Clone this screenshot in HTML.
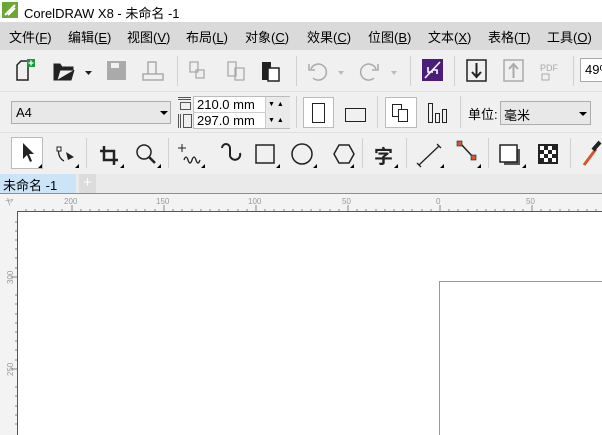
<!DOCTYPE html>
<html><head><meta charset="utf-8"><style>
*{margin:0;padding:0;box-sizing:border-box}
html,body{width:602px;height:435px;overflow:hidden}
body{background:#fff;font-family:"Liberation Sans","Noto Sans CJK SC",sans-serif;position:relative;font-size:13px;color:#000}
.a{position:absolute}
.menu span{position:absolute;top:5px;font-size:13px}
.sep{position:absolute;width:1px;background:#d0d0d0}
.tri{position:absolute;width:0;height:0;border-left:4px solid transparent;border-bottom:4px solid #000}
</style></head><body>
<div class="a" style="left:0;top:0;width:602px;height:22px;background:#fff"></div>
<svg class="a" style="left:2px;top:2px" width="16" height="16"><rect width="16" height="16" fill="#6aa833"/><path d="M3 13 L13 3 M6 13 L13 6" stroke="#fff" stroke-width="2"/></svg>
<div class="a" style="left:24px;top:3px;font-size:13px">CorelDRAW X8 - 未命名 -1</div>
<div class="a menu" style="left:0;top:22px;width:602px;height:28px;background:#dadada">
<span style="left:9px">文件(<u>F</u>)</span><span style="left:68px">编辑(<u>E</u>)</span><span style="left:127px">视图(<u>V</u>)</span><span style="left:186px">布局(<u>L</u>)</span><span style="left:245px">对象(<u>C</u>)</span><span style="left:307px">效果(<u>C</u>)</span><span style="left:368px">位图(<u>B</u>)</span><span style="left:428px">文本(<u>X</u>)</span><span style="left:488px">表格(<u>T</u>)</span><span style="left:547px">工具(<u>O</u>)</span>
</div>
<div class="a" style="left:0;top:50px;width:602px;height:124px;background:#f0f0f0"></div>
<div class="a" style="left:0;top:91px;width:602px;height:1px;background:#e0e0e0"></div>
<div class="a" style="left:0;top:132px;width:602px;height:1px;background:#e0e0e0"></div>
<svg class="a" style="left:0;top:50px" width="602" height="41">
<path d="M17 30 V15 L21 11 H28 V30 Z" fill="none" stroke="#222" stroke-width="1.5"/>
<rect x="27" y="9" width="8" height="8" fill="#1a9a3a"/><path d="M31 10.5v5M28.5 13h5" stroke="#fff" stroke-width="1.3"/>
<path d="M54 30 V14 H60 L62 17 H73 V20 H60 L57 30 Z M57 30 H71 L74 20" fill="#222" stroke="#222"/>
<path d="M85 21 h7 l-3.5 4z" fill="#222"/>
<rect x="107" y="11" width="19" height="19" fill="#aaa"/><rect x="111" y="13" width="8" height="5" fill="#f0f0f0"/>
<path d="M148 24 V12 H156 V24 M143 24 H163 V30 H143 Z" fill="none" stroke="#aaa" stroke-width="1.5"/>
<path d="M190 12 h8 v10 h-8z M196 20 h8 v8 h-8z" fill="none" stroke="#aaa" stroke-width="1.3"/>
<path d="M228 12 h8 v14 h-8z M235 18 h9 v12 h-9z" fill="none" stroke="#aaa" stroke-width="1.3"/>
<rect x="262" y="12" width="9" height="18" fill="#222"/><rect x="268" y="18" width="11" height="13" fill="#fff" stroke="#222" stroke-width="1.5"/>
<path d="M311 19 a8 8 0 1 1 2 9" fill="none" stroke="#aaa" stroke-width="1.5"/><path d="M309 14 v6 h6" fill="none" stroke="#aaa" stroke-width="1.5"/>
<path d="M338 21 h6 l-3 4z M391 21 h6 l-3 4z" fill="#bbb"/>
<path d="M376 19 a8 8 0 1 0 -2 9" fill="none" stroke="#aaa" stroke-width="1.5"/><path d="M378 14 v6 h-6" fill="none" stroke="#aaa" stroke-width="1.5"/>
<rect x="422" y="9" width="21" height="22" fill="#4a1d78"/><path d="M425 28 L440 12 M428 17 v5 h5 M437 24 v-4 h-4" stroke="#fff" stroke-width="1.6" fill="none"/>
<rect x="467" y="10" width="19" height="21" fill="none" stroke="#222" stroke-width="1.5"/><path d="M476.5 13 v13 M472 22 l4.5 5 4.5-5" stroke="#222" stroke-width="2" fill="none"/>
<rect x="504" y="10" width="19" height="21" fill="none" stroke="#aaa" stroke-width="1.5"/><path d="M513.5 28 v-13 M509 19 l4.5-5 4.5 5" stroke="#aaa" stroke-width="2" fill="none"/>
<text x="540" y="21" font-size="9" fill="#aaa" font-family="Liberation Sans">PDF</text><rect x="542" y="24" width="7" height="6" fill="none" stroke="#aaa"/>
</svg>
<div class="sep" style="left:177px;top:56px;height:30px"></div>
<div class="sep" style="left:296px;top:56px;height:30px"></div>
<div class="sep" style="left:410px;top:56px;height:30px"></div>
<div class="sep" style="left:454px;top:56px;height:30px"></div>
<div class="sep" style="left:573px;top:56px;height:30px"></div>
<div class="a" style="left:580px;top:58px;width:22px;height:24px;background:#fff;border:1px solid #aaa;border-right:none;padding:3px 0 0 4px;font-size:13px;overflow:hidden;white-space:nowrap">49%</div>
<div class="a" style="left:11px;top:101px;width:160px;height:23px;background:#e8e8e8;border:1px solid #adadad;padding:3px 0 0 4px;font-size:13px">A4</div>
<div class="a" style="left:160px;top:111px;border-left:4px solid transparent;border-right:4px solid transparent;border-top:4px solid #000"></div>
<div class="a" style="left:178px;top:97px;width:13px;height:1px;background:#555"></div>
<div class="a" style="left:178px;top:99px;width:13px;height:1px;background:#555"></div>
<div class="a" style="left:180px;top:102px;width:11px;height:8px;border:1px solid #555"></div>
<div class="a" style="left:178px;top:114px;width:1px;height:14px;background:#555"></div>
<div class="a" style="left:180px;top:114px;width:1px;height:14px;background:#555"></div>
<div class="a" style="left:183px;top:114px;width:9px;height:14px;border:1px solid #555"></div>
<div class="a" style="left:193px;top:96px;width:97px;height:33px;background:#fff;border:1px solid #bbb"></div>
<div class="a" style="left:193px;top:112px;width:97px;height:1px;background:#ccc"></div>
<div class="a" style="left:197px;top:97px;font-size:13px">210.0 mm</div>
<div class="a" style="left:197px;top:113px;font-size:13px">297.0 mm</div>
<div class="a" style="left:265px;top:97px;width:25px;height:31px;background:#eaeaea;border-left:1px solid #ccc"></div>
<div class="a" style="left:268px;top:101px;font-size:7px">▼ ▲</div>
<div class="a" style="left:268px;top:117px;font-size:7px">▼ ▲</div>
<div class="sep" style="left:296px;top:96px;height:32px"></div>
<div class="a" style="left:303px;top:97px;width:31px;height:31px;background:#fff;border:1px solid #bbb"></div>
<div class="a" style="left:312px;top:103px;width:13px;height:20px;border:1.5px solid #222"></div>
<div class="a" style="left:345px;top:108px;width:21px;height:14px;border:1.5px solid #222"></div>
<div class="sep" style="left:377px;top:96px;height:32px"></div>
<div class="a" style="left:385px;top:97px;width:32px;height:31px;background:#fff;border:1px solid #bbb"></div>
<div class="a" style="left:392px;top:104px;width:10px;height:13px;border:1.5px solid #222;background:#fff"></div>
<div class="a" style="left:398px;top:109px;width:10px;height:13px;border:1.5px solid #222;background:#fff"></div>
<div class="a" style="left:428px;top:103px;width:5px;height:20px;border:1.5px solid #222"></div>
<div class="a" style="left:435px;top:113px;width:5px;height:10px;border:1.5px solid #222"></div>
<div class="a" style="left:442px;top:109px;width:5px;height:14px;border:1.5px solid #222"></div>
<div class="sep" style="left:460px;top:96px;height:32px"></div>
<div class="a" style="left:468px;top:104px;font-size:13px">单位:</div>
<div class="a" style="left:500px;top:101px;width:91px;height:24px;background:#e8e8e8;border:1px solid #adadad;padding:3px 0 0 3px;font-size:13px">毫米</div>
<div class="a" style="left:579px;top:112px;border-left:4px solid transparent;border-right:4px solid transparent;border-top:4px solid #000"></div>
<div class="a" style="left:11px;top:137px;width:32px;height:32px;background:#fff;border:1px solid #bbb"></div>
<svg class="a" style="left:0;top:134px" width="602" height="40">
<path d="M23 9 L23 25 L27 21 L30 28 L32 27 L29 20 L34 20 Z" fill="#222"/>
<path d="M60 13 a10 10 0 0 0 4 14" fill="none" stroke="#222" stroke-width="1.3"/><rect x="57" y="13" width="4" height="4" fill="#fff" stroke="#222"/><path d="M66 18 L74 23 L68 26Z" fill="#222"/>
<path d="M104 12 v14 h14 M100 17 h14 v14" fill="none" stroke="#222" stroke-width="2.5"/>
<circle cx="144" cy="18" r="7" fill="none" stroke="#222" stroke-width="1.5"/><path d="M149 23 l6 6" stroke="#222" stroke-width="2.5"/>
<path d="M182 10 v8 M178 14 h8" stroke="#222"/><path d="M184 26 q2-6 4 0 q2 6 4 0 q2-6 4 0 q2 6 4 0" fill="none" stroke="#222" stroke-width="1.3"/>
<path d="M222 14 a4 4 0 0 1 8 0 v8 a5 5 0 0 0 10 -3" fill="none" stroke="#222" stroke-width="2"/>
<rect x="256" y="11" width="18" height="18" fill="none" stroke="#222" stroke-width="1.5"/>
<circle cx="302" cy="20" r="10" fill="none" stroke="#222" stroke-width="1.5"/>
<path d="M334 20 l5-9 h10 l5 9 l-5 9 h-10 z" fill="none" stroke="#222" stroke-width="1.5"/>
<text x="374" y="29" font-size="19" font-weight="bold" fill="#222" font-family="Noto Sans CJK SC">字</text>
<path d="M419 31 L439 12 M417 29 l4 4 M437 10 l4 4" stroke="#222" stroke-width="1.3"/>
<path d="M460 9 L473 23" stroke="#222" stroke-width="1.5"/><rect x="457" y="7" width="5" height="5" fill="#d4562a" stroke="#222" stroke-width=".6"/><rect x="471" y="21" width="5" height="5" fill="#d4562a" stroke="#222" stroke-width=".6"/>
<path d="M504 15 h16 v16 h-16z" fill="#555"/><rect x="500" y="11" width="17" height="17" fill="#fff" stroke="#222" stroke-width="1.5"/>
<rect x="538" y="10" width="20" height="20" fill="#222"/>
<g fill="#fff"><rect x="540" y="12" width="4" height="4"/><rect x="548" y="12" width="4" height="4"/><rect x="544" y="16" width="4" height="4"/><rect x="552" y="16" width="4" height="4"/><rect x="540" y="20" width="4" height="4"/><rect x="548" y="20" width="4" height="4"/><rect x="544" y="24" width="4" height="4"/><rect x="552" y="24" width="4" height="4"/></g>
<path d="M584 31 L596 15" stroke="#d4562a" stroke-width="3"/><path d="M593 16 L600 8" stroke="#222" stroke-width="4"/>
</svg>
<div class="tri" style="left:38px;top:164px"></div><div class="tri" style="left:75px;top:164px"></div><div class="tri" style="left:120px;top:164px"></div><div class="tri" style="left:157px;top:164px"></div><div class="tri" style="left:201px;top:164px"></div><div class="tri" style="left:276px;top:164px"></div><div class="tri" style="left:313px;top:164px"></div><div class="tri" style="left:350px;top:164px"></div><div class="tri" style="left:394px;top:164px"></div><div class="tri" style="left:440px;top:164px"></div><div class="tri" style="left:477px;top:164px"></div><div class="tri" style="left:522px;top:164px"></div>
<div class="sep" style="left:86px;top:138px;height:30px"></div>
<div class="sep" style="left:168px;top:138px;height:30px"></div>
<div class="sep" style="left:362px;top:138px;height:30px"></div>
<div class="sep" style="left:406px;top:138px;height:30px"></div>
<div class="sep" style="left:488px;top:138px;height:30px"></div>
<div class="sep" style="left:570px;top:138px;height:30px"></div>
<div class="a" style="left:0;top:174px;width:602px;height:19px;background:#eaeaea"></div>
<div class="a" style="left:0;top:174px;width:76px;height:19px;background:#cce4f7;padding:1px 0 0 3px;font-size:13px">未命名 -1</div>
<div class="a" style="left:79px;top:174px;width:17px;height:19px;background:#dcdcdc;color:#fff;font-size:15px;text-align:center;line-height:18px">+</div>
<div class="a" style="left:0;top:193px;width:602px;height:1px;background:#2eb4c8"></div>
<div class="a" style="left:0;top:194px;width:602px;height:17px;background:#f3f3f3"></div>
<div class="a" style="left:0;top:194px;width:17px;height:241px;background:#f3f3f3"></div>
<svg class="a" style="left:0;top:194px" width="602" height="241" font-family="Liberation Sans" font-size="8" fill="#999">
<text x="64" y="10">200</text><text x="156" y="10">150</text><text x="248" y="10">100</text><text x="342" y="10">50</text><text x="436" y="10">0</text><text x="526" y="10">50</text>
<path d="M72 11v6M164 11v6M256 11v6M348 11v6M440 11v6M532 11v6" stroke="#888"/>
<path d="M26 15v2M35 15v2M44 15v2M53 15v2M62 15v2M81 15v2M90 15v2M99 15v2M108 15v2M118 15v2M127 15v2M136 15v2M145 15v2M155 15v2M173 15v2M182 15v2M192 15v2M201 15v2M210 15v2M219 15v2M228 15v2M238 15v2M247 15v2M265 15v2M274 15v2M284 15v2M293 15v2M302 15v2M311 15v2M320 15v2M330 15v2M339 15v2M357 15v2M366 15v2M376 15v2M385 15v2M394 15v2M403 15v2M412 15v2M422 15v2M431 15v2M449 15v2M458 15v2M468 15v2M477 15v2M486 15v2M495 15v2M504 15v2M514 15v2M523 15v2M541 15v2M550 15v2M560 15v2M569 15v2M578 15v2M587 15v2M596 15v2" stroke="#888"/>
<text transform="translate(13,90) rotate(-90)">300</text><text transform="translate(13,182) rotate(-90)">250</text>
<path d="M11 83h6M11 175h6" stroke="#888"/>
<path d="M15 28h2M15 37h2M15 46h2M15 55h2M15 64h2M15 74h2M15 101h2M15 110h2M15 120h2M15 129h2M15 138h2M15 147h2M15 156h2M15 166h2M15 193h2M15 202h2M15 212h2M15 221h2M15 230h2" stroke="#888"/>
<text x="5" y="11" font-size="9">ヤ</text>
</svg>
<div class="a" style="left:17px;top:211px;width:585px;height:1px;background:#555"></div>
<div class="a" style="left:17px;top:211px;width:1px;height:224px;background:#555"></div>
<div class="a" style="left:439px;top:281px;width:163px;height:154px;border-left:1px solid #999;border-top:1px solid #999"></div>
</body></html>
